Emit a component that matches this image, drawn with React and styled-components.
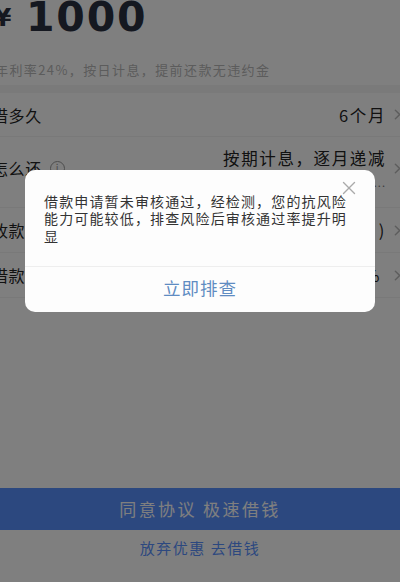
import React from "react"
import styled, { createGlobalStyle } from "styled-components"
import { ChevronRight, X } from "lucide-react"

const GlobalStyle = createGlobalStyle`
  html, body {
    margin: 0;
    padding: 0;
    background: #fff;
  }
  body {
    font-family: "Noto Sans CJK SC", "Liberation Sans", sans-serif;
  }
`

const Page = styled.div`
  position: relative;
  width: 400px;
  height: 582px;
  overflow: hidden;
  display: flex;
  flex-direction: column;
  background: #fff;
`

const Amount = styled.div`
  height: 42px;
  display: flex;
  align-items: center;
  margin-top: -4px;
  padding-bottom: 4px;
  box-sizing: content-box;
  color: #2b3040;
  font-family: "DejaVu Sans", sans-serif;
  font-weight: 700;
`

const Currency = styled.span`
  font-size: 25px;
  margin-left: -6px;
  width: 32px;
`

const Digits = styled.span`
  font-size: 41px;
  line-height: 42px;
  letter-spacing: 1.8px;
`

const Note = styled.div`
  height: 31px;
  margin-top: 12px;
  margin-left: -5px;
  display: flex;
  align-items: center;
  font-size: 13px;
  letter-spacing: 1.4px;
  color: #b8b8b8;
  white-space: nowrap;
`

const Band = styled.div`
  height: 8px;
  background: #f4f4f4;
`

const Row = styled.div`
  height: ${props => props.$height}px;
  padding-bottom: ${props => props.$lift || 0}px;
  display: flex;
  align-items: center;
  justify-content: space-between;
  border-bottom: 1px solid #f2f2f2;
  box-sizing: border-box;
`

const Label = styled.div`
  display: flex;
  align-items: center;
  gap: 8px;
  margin-left: -8px;
  font-size: 16px;
  letter-spacing: 0.6px;
  color: #222;
  white-space: nowrap;
`

const InfoMark = styled.span`
  width: 13px;
  height: 13px;
  border: 1px solid #999;
  border-radius: 50%;
  display: inline-flex;
  align-items: center;
  justify-content: center;
  font-size: 10px;
  line-height: 1;
  color: #999;
`

const Value = styled.div`
  display: flex;
  align-items: center;
  margin-right: -6px;
  gap: 3px;
  font-size: 16.5px;
  letter-spacing: 1.6px;
  color: #222;
  white-space: nowrap;
`

const ValueStack = styled.div`
  display: flex;
  flex-direction: column;
  align-items: flex-end;
  line-height: 23px;
`

const Dots = styled.div`
  margin-top: 5px;
  font-size: 11px;
  line-height: 14px;
  letter-spacing: 1px;
  color: #777;
`

const Percent = styled.span`
  margin-right: 5px;
`

const Arrow = styled(ChevronRight)`
  width: 17px;
  height: 17px;
  color: #bbb;
  flex: none;
`

const Footer = styled.div`
  margin-top: auto;
  padding-bottom: 24px;
  display: flex;
  flex-direction: column;
  align-items: center;
`

const Agree = styled.button`
  width: 100%;
  height: 42px;
  border: 0;
  padding: 0 0 2px;
  background: #5990ff;
  color: #fff;
  font-family: inherit;
  font-size: 17px;
  letter-spacing: 2.4px;
`

const Giveup = styled.a`
  margin-top: 8px;
  line-height: 20px;
  font-size: 15px;
  letter-spacing: 1.5px;
  color: #5990ff;
`

const Overlay = styled.div`
  position: absolute;
  inset: 0;
  padding-top: 170px;
  display: flex;
  justify-content: center;
  align-items: flex-start;
  background: rgba(0, 0, 0, 0.5);
`

const Modal = styled.div`
  position: relative;
  width: 350px;
  height: 142px;
  display: flex;
  flex-direction: column;
  border-radius: 10px;
  background: #fdfdfd;
`

const Close = styled(X)`
  position: absolute;
  top: 7px;
  right: 15px;
  width: 22px;
  height: 22px;
  color: #aaa;
  stroke-width: 1.5;
`

const Message = styled.p`
  margin: 0;
  height: 96px;
  box-sizing: border-box;
  padding: 23px 26px 0 19px;
  font-size: 14px;
  line-height: 17.3px;
  letter-spacing: 1.15px;
  color: #333;
`

const Check = styled.div`
  flex: 1;
  padding-bottom: 4px;
  display: flex;
  align-items: center;
  justify-content: center;
  border-top: 1px solid #eee;
  font-size: 17.5px;
  letter-spacing: 1px;
  color: #5f8cc2;
`

const App = () => (
  <Page>
    <GlobalStyle />
    <Amount>
      <Currency>¥</Currency>
      <Digits>1000</Digits>
    </Amount>
    <Note>年利率24%，按日计息，提前还款无违约金</Note>
    <Band />
    <Row $height={44}>
      <Label>借多久</Label>
      <Value>
        6个月
        <Arrow />
      </Value>
    </Row>
    <Row $height={71} $lift={8}>
      <Label>
        怎么还
        <InfoMark>i</InfoMark>
      </Label>
      <Value>
        <ValueStack>
          按期计息，逐月递减
          <Dots>......</Dots>
        </ValueStack>
        <Arrow />
      </Value>
    </Row>
    <Row $height={45}>
      <Label>收款</Label>
      <Value>
        )
        <Arrow />
      </Value>
    </Row>
    <Row $height={45}>
      <Label>借款</Label>
      <Value>
        <Percent>%</Percent>
        <Arrow />
      </Value>
    </Row>
    <Footer>
      <Agree>同意协议 极速借钱</Agree>
      <Giveup>放弃优惠 去借钱</Giveup>
    </Footer>
    <Overlay>
      <Modal>
        <Close />
        <Message>
          借款申请暂未审核通过，经检测，您的抗风险能力可能较低，排查风险后审核通过率提升明显
        </Message>
        <Check>立即排查</Check>
      </Modal>
    </Overlay>
  </Page>
)

export default App
